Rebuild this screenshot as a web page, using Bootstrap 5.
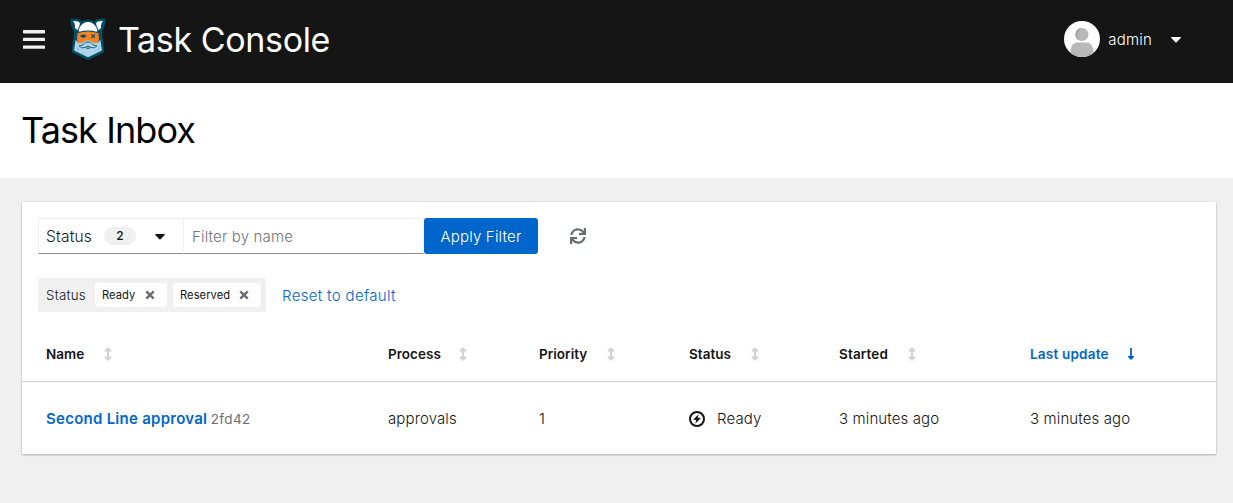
<!DOCTYPE html>
<html lang="en">
<head>
<meta charset="utf-8">
<meta name="viewport" content="width=device-width, initial-scale=1">
<title>Task Console</title>
<link href="https://cdn.jsdelivr.net/npm/bootstrap@5.3.0/dist/css/bootstrap.min.css" rel="stylesheet">
<style>
body{font-family:Inter,"Liberation Sans",sans-serif;font-size:15px;line-height:24px;font-weight:300;color:#151515;background:#f0f0f0}
svg{display:block;flex:none}
.topbar{height:83px;background:#151515;color:#fff;padding:0 52px 5px 23px}
.brand-name{font-size:34px;line-height:40px;font-weight:400;letter-spacing:-.37px;margin-left:12px;padding-top:2px;color:#fff}
.page-head{height:95px;padding:24px 21px}
.page-head h1{font-size:36px;line-height:47px;font-weight:400;letter-spacing:-.9px;color:#000;margin:0}
.user-name{margin:0 19px 0 8px;padding-top:2px;letter-spacing:.2px}
.panel{margin:24px 17px 0 22px;height:252px;background:#fff;box-shadow:0 1px 2px rgba(3,3,3,.26),0 0 2px rgba(3,3,3,.08)}
.tools{padding:16px 16px 0}
.status-select{width:146px;height:36px;border:1px solid #f0f0f0;border-bottom-color:#8a8d90;padding:1px 18px 0 7px;background:#fff}
.status-text{font-size:15.500px;letter-spacing:.2px}
.count{width:32px;height:18px;border-radius:9px;background:#f0f0f0;font-size:12px;line-height:18px;font-weight:500;text-align:center;margin:-1px 0 0 12px}
.filter-input{width:240px;height:36px;border:1px solid #f0f0f0;border-left:0;border-bottom-color:#8a8d90;border-radius:0;padding:1px 8px 0;font-size:15px;font-weight:300;letter-spacing:.15px;color:#151515}
.filter-input::placeholder{color:#757575;opacity:1}
.btn-apply{width:114px;height:36px;padding:2px 0 0;border:0;border-radius:3px;background:#06c;color:#fff;font-size:15px;font-weight:300;letter-spacing:.2px}
.chips{height:34px;background:#f0f0f0;border-radius:3px;padding:0 5px 0 8px;font-size:13.3px;letter-spacing:.25px}
.chip{height:24px;background:#fff;border-radius:3px;padding:0 12px 0 7px;font-size:11.2px;font-weight:400;letter-spacing:.05px}
.blue{color:#06c;text-decoration:none}
.reset{margin-left:16px;padding-top:1px;letter-spacing:.33px}
.tasks{table-layout:fixed;margin:14px 0 0;--bs-table-bg:transparent;color:#151515}
.tasks th{height:55px;padding:1px 8px 0;font-size:13.5px;font-weight:600;vertical-align:middle;border-bottom:1px solid #d2d2d2;color:#151515}
.tasks td{height:72px;padding:4px 8px 0;vertical-align:middle;border:0;color:#151515;letter-spacing:.12px;box-shadow:none}
.tasks th:first-child,.tasks td:first-child{padding-left:24px}
.sort-label{gap:20px;letter-spacing:.04px}
.task-name{font-weight:600;letter-spacing:.26px}
.task-id{font-size:13.500px;font-weight:400;color:#6a6e73;letter-spacing:.4px;margin-left:-1px}
.status-cell{gap:12px}
.status-cell svg{margin-top:-1px}
</style>
</head>
<body class="min-vh-100">
<svg width="0" height="0" class="position-absolute"><defs>
<symbol id="sort" viewBox="0 0 8 14"><path d="M4 0 7.500 3.500V4.500H5.100v5H7.500v1L4 14 .5 10.500v-1h2.400v-5H.5v-1z" fill="#d2d2d2"/></symbol>
<symbol id="times" viewBox="0 0 10 10"><path d="M1.3 1.3l7.4 7.4M8.7 1.3L1.3 8.7" stroke="#6a6e73" stroke-width="2.5"/></symbol>
<symbol id="caret" viewBox="0 0 10 6"><path d="M.7 0h8.6q1 .2.4 1L5.6 5.3q-.6.5-1.2 0L.3 1Q-.3.2.7 0z" fill="currentColor"/></symbol>
</defs></svg>
<header class="topbar navbar flex-nowrap justify-content-between">
  <div class="d-flex align-items-center">
    <svg width="22" height="19" viewBox="0 0 22 19" fill="#f0f0f0"><rect width="22" height="3.4" rx=".6"/><rect y="7.7" width="22" height="3.4" rx=".6"/><rect y="15.4" width="22" height="3.4" rx=".6"/></svg>
    <svg width="36" height="43" viewBox="0 0 36 43" style="margin-left:25px">
      <path d="M.3 1Q5 0 9.500 1.500q1.500 1 2 2.200Q18 .2 24.500 3.700q.5-1.200 2-2.200Q31 0 35.700 1 35 9.500 32 13.500l.8 8L34.500 34 18 42 1.500 34l1.700-12.500.8-8Q.5 9.500.3 1z" fill="#004f66"/>
      <path d="M3 3q5.500-.4 7 2.200-.3 3-2.500 6.800Q4.500 11 5 7.500 4.900 5 3 3zM33 3q-5.500-.4-7 2.200.3 3 2.500 6.800 3-1 2.500-4.500Q31.100 5 33 3z" fill="#fff"/>
      <path d="M8.500 12.500Q11 4 18 4T27.500 12.500l-.8 1.300Q18 11 9.300 13.800z" fill="#fff"/>
      <path d="M7.500 15.300q10.500-3.400 21 0l.5 5.200-.7 4L24 29l-6 2-6-2-4.300-4.500-.7-4z" fill="#f68121"/>
      <path d="M5.700 21.500q1 2.300 3.300 3.800Q13 25.500 15 22.800h6q2 2.700 6 2.500 2.300-1.500 3.300-3.800l1.700 11L18 39.300 4 32.500z" fill="#add4ed"/>
      <path d="M9 28q4.500-.2 6.500-3.800h5q2 3.600 6.500 3.800-2.500 3-6 1.400l-3-1.500-3 1.500Q11.500 31 9 28z" fill="#add4ed" stroke="#004f66" stroke-width=".8"/>
      <path d="M15.800 29.800h4.400L18 31z" fill="#f68121" stroke="#004f66" stroke-width=".5"/>
      <path d="M11 18q2.400-1.800 4.600 0-2.200 2.200-4.600 0zM21.300 16.300l3.600 3.600M24.900 16.300l-3.600 3.600" fill="#004f66" stroke="#004f66" stroke-width="1.200"/>
      <path d="M6.500 32l2-3v4.500zM12 36l.8-2.500 1.400 3.500zM27 32.500l2-2.500-1 4z" fill="#8cb9d4"/>
    </svg>
    <span class="brand-name text-nowrap">Task Console</span>
  </div>
  <div class="d-flex align-items-center">
    <svg width="36" height="36" viewBox="0 0 36 36"><defs><clipPath id="round"><circle cx="18" cy="18" r="18"/></clipPath></defs><g clip-path="url(#round)"><path fill="#fff" d="M0 0h36v36H0z"/><path d="M6 36q0-14.500 7-14.500h9.500Q30 21.500 30 36z" fill="#b8b8b8"/><path d="M11.500 31.500V36h-4zM24.500 31.500V36h4z" fill="#a3a3a3"/><circle cx="18" cy="13.500" r="6.500" fill="#b8b8b8"/><path d="M18 7a6.500 6.500 0 0 0-3 12.300Q11 12 18 7z" fill="#a3a3a3"/></g></svg>
    <span class="user-name">admin</span>
    <svg width="10" height="6" style="margin-top:1px"><use href="#caret"/></svg>
  </div>
</header>
<section class="page-head bg-white"><h1>Task Inbox</h1></section>
<main class="panel">
  <div class="tools">
    <div class="d-flex align-items-center">
      <div class="status-select d-flex align-items-center"><span class="status-text">Status</span><span class="count">2</span><svg class="ms-auto" width="10" height="6"><use href="#caret"/></svg></div>
      <input class="filter-input form-control" placeholder="Filter by name" aria-label="Filter by name">
      <button class="btn btn-apply">Apply Filter</button>
      <svg width="16" height="16" viewBox="0 0 512 512" fill="#6a6e73" style="margin-left:32px"><path d="M440.650 12.570l4 82.770A247.160 247.160 0 0 0 255.830 8C134.730 8 33.910 94.920 12.290 209.820A12 12 0 0 0 24.090 224h49.050a12 12 0 0 0 11.670-9.260 175.910 175.910 0 0 1 317-56.940l-101.460-4.860a12 12 0 0 0-12.570 12v47.410a12 12 0 0 0 12 12H500a12 12 0 0 0 12-12V12a12 12 0 0 0-12-12h-47.370a12 12 0 0 0-11.980 12.570zM255.830 432a175.610 175.610 0 0 1-146-77.800l101.800 4.870a12 12 0 0 0 12.570-12v-47.400a12 12 0 0 0-12-12H12a12 12 0 0 0-12 12V500a12 12 0 0 0 12 12h47.350a12 12 0 0 0 12-12.600l-4.150-82.570A247.170 247.170 0 0 0 255.830 504c121.110 0 221.930-86.920 243.550-201.820a12 12 0 0 0-11.800-14.180h-49.050a12 12 0 0 0-11.670 9.260A175.860 175.860 0 0 1 255.830 432z"/></svg>
    </div>
    <div class="d-flex align-items-center" style="margin-top:24px">
      <div class="chips d-flex align-items-center">
        <span style="width:49px">Status</span>
        <span class="chip d-flex align-items-center justify-content-between" style="width:72px;margin-right:6px">Ready<svg width="10" height="10"><use href="#times"/></svg></span>
        <span class="chip d-flex align-items-center justify-content-between" style="width:88px">Reserved<svg width="10" height="10"><use href="#times"/></svg></span>
      </div>
      <a class="blue reset" href="#">Reset to default</a>
    </div>
  </div>
  <table class="table tasks">
    <colgroup><col style="width:358px"><col style="width:151px"><col style="width:150px"><col style="width:150px"><col style="width:191px"><col></colgroup>
    <thead><tr>
      <th><div class="sort-label d-flex align-items-center">Name<svg width="8" height="14"><use href="#sort"/></svg></div></th>
      <th><div class="sort-label d-flex align-items-center" style="gap:18px">Process<svg width="8" height="14"><use href="#sort"/></svg></div></th>
      <th><div class="sort-label d-flex align-items-center">Priority<svg width="8" height="14"><use href="#sort"/></svg></div></th>
      <th><div class="sort-label d-flex align-items-center">Status<svg width="8" height="14"><use href="#sort"/></svg></div></th>
      <th><div class="sort-label d-flex align-items-center" style="letter-spacing:.15px">Started<svg width="8" height="14"><use href="#sort"/></svg></div></th>
      <th><div class="sort-label d-flex align-items-center blue" style="gap:19px;letter-spacing:.2px">Last update<svg width="6" height="12" viewBox="0 0 6 12"><path d="M2.100 0h1.800v8H6v1L3 12 0 9V8h2.100z" fill="#06c"/></svg></div></th>
    </tr></thead>
    <tbody><tr>
      <td class="text-nowrap"><a class="blue task-name" href="#">Second Line approval</a> <span class="task-id">2fd42</span></td>
      <td>approvals</td>
      <td>1</td>
      <td><div class="status-cell d-flex align-items-center"><svg width="16" height="16" viewBox="0 0 16 16"><circle cx="8" cy="8" r="7" fill="none" stroke="#151515" stroke-width="2"/><path d="M9.700 3.200L4.200 8.600l3 .7-1 3.500 5.600-5.500-3.100-.7z" fill="#151515"/></svg>Ready</div></td>
      <td>3 minutes ago</td>
      <td>3 minutes ago</td>
    </tr></tbody>
  </table>
</main>
<script src="https://cdn.jsdelivr.net/npm/bootstrap@5.3.0/dist/js/bootstrap.bundle.min.js"></script>
</body>
</html>
